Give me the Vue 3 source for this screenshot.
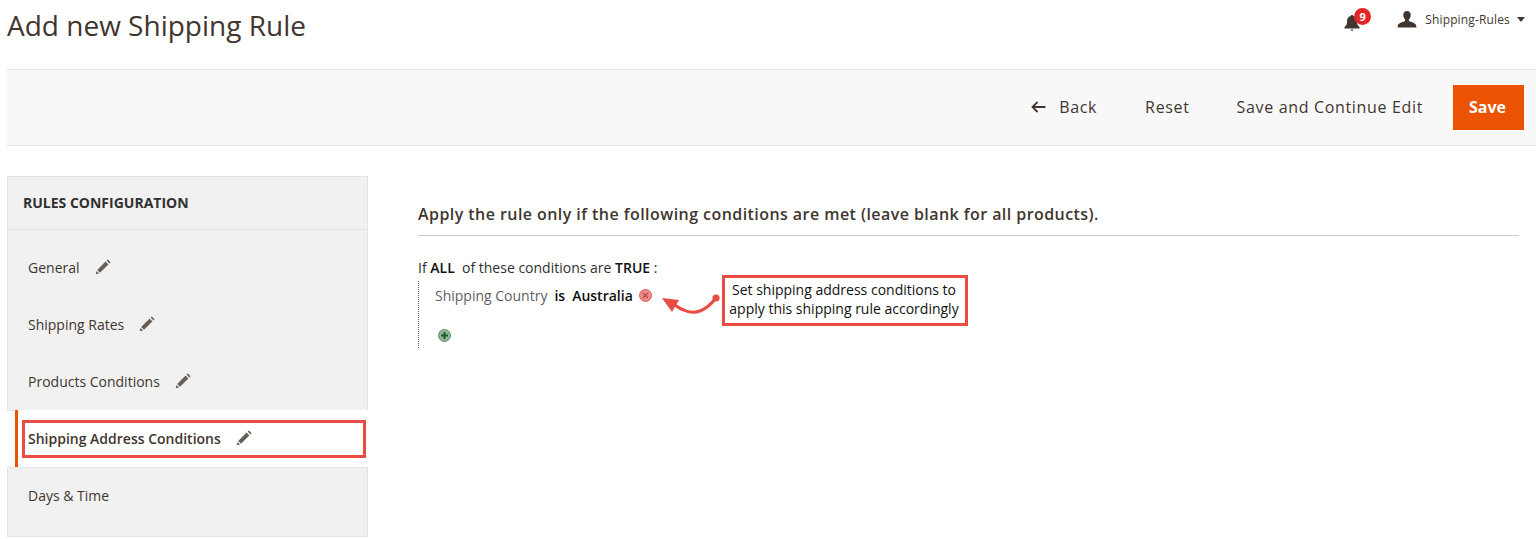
<script setup>
const topItems = ['General', 'Shipping Rates', 'Products Conditions']
</script>

<template>
  <div class="page">
    <header class="top">
      <h1>Add new Shipping Rule</h1>
      <div class="top-actions">
        <div class="bell">
          <svg width="16" height="18" viewBox="0 0 16 18">
            <path fill="#41362f" d="M8 1c.8 0 1.300.5 1.400 1.100C12 2.800 13 5 13 8c0 2.600 1 3.700 2.500 5v1.500H.5V13C2 11.700 3 10.600 3 8c0-3 1-5.200 3.600-5.900C6.700 1.500 7.200 1 8 1zM6.700 15.500h2.600c0 .7-.6 1.300-1.300 1.300s-1.300-.6-1.300-1.300z" />
          </svg>
          <span class="badge">9</span>
        </div>
        <div class="user">
          <svg width="20" height="17" viewBox="0 0 20 18">
            <path fill="#41362f" d="M10 0c2.600 0 4 1.800 4 4.300 0 2-1 3.800-2 4.700v1.500c1.500 1 7 1.800 7.600 4.500.2 1 .4 2 .4 2.500H0c0-.5.200-1.500.4-2.500C1 12.300 6.500 11.500 8 10.500V9C7 8.100 6 6.300 6 4.300 6 1.800 7.400 0 10 0z" />
          </svg>
          <span class="user-name">Shipping-Rules</span>
          <span class="caret"></span>
        </div>
      </div>
    </header>

    <div class="toolbar">
      <button class="tool back">
        <svg width="15" height="12" viewBox="0 0 15 12">
          <path fill="none" stroke="#41362f" stroke-width="1.800" d="M14.500 6H2M6.500 1L1.500 6l5 5" />
        </svg>
        Back
      </button>
      <button class="tool">Reset</button>
      <button class="tool">Save and Continue Edit</button>
      <button class="save">Save</button>
    </div>

    <div class="body">
      <aside class="side">
        <div class="side-group">
          <div class="side-title">RULES CONFIGURATION</div>
          <div class="side-list">
            <div v-for="item in topItems" :key="item" class="side-item">
              <span>{{ item }}</span>
              <svg class="pencil" width="16" height="16" viewBox="0 0 16 16">
                <path fill="#676056" d="M10.600 2.600l2.800 2.800L5 13.800 2.200 11zM11.600 1.600l1.200-1.200 2.800 2.800-1.200 1.200zM1.600 11.900l2.500 2.500-3.400.9z" />
              </svg>
            </div>
          </div>
        </div>
        <div class="side-item active">
          <span>Shipping Address Conditions</span>
          <svg class="pencil" width="16" height="16" viewBox="0 0 16 16">
            <path fill="#676056" d="M10.600 2.600l2.800 2.800L5 13.800 2.200 11zM11.600 1.600l1.200-1.200 2.800 2.800-1.200 1.200zM1.600 11.900l2.500 2.500-3.400.9z" />
          </svg>
          <div class="side-mark"></div>
        </div>
        <div class="side-group last">
          <div class="side-item">
            <span>Days &amp; Time</span>
          </div>
        </div>
      </aside>

      <main class="content">
        <h2>Apply the rule only if the following conditions are met (leave blank for all products).</h2>
        <div class="cond-head">If <b>ALL</b>&nbsp; of these conditions are <b>TRUE</b> :</div>
        <div class="cond-tree">
          <div class="cond-row">
            <span>Shipping Country</span>
            <b>is</b>
            <b>Australia</b>
            <svg class="cond-icon" width="13" height="13" viewBox="0 0 13 13">
              <circle cx="6.500" cy="6.500" r="6" fill="#ef8a8a" stroke="#d65b5b" />
              <path stroke="#b84545" stroke-width="1.200" d="M4 4l5 5M9 4l-5 5" />
            </svg>
          </div>
          <svg class="add-icon" width="13" height="13" viewBox="0 0 13 13">
            <circle cx="6.500" cy="6.500" r="6" fill="#8fb896" stroke="#5f9068" />
            <path stroke="#1f5a2c" stroke-width="2" d="M6.500 3v7M3 6.500h7" />
          </svg>

          <div class="note">
            <svg class="note-arrow" width="60" height="26" viewBox="0 0 60 26">
              <circle cx="54" cy="7" r="3.600" fill="#e94c43" />
              <path fill="none" stroke="#e94c43" stroke-width="3" d="M13 14C20 20 30 23 38 20C46 17 50 12 54 7" />
              <path fill="#e94c43" d="M0 7l17 2-7 12z" />
            </svg>
            <div class="note-box">Set shipping address conditions to<br>apply this shipping rule accordingly</div>
          </div>
        </div>
      </main>
    </div>
  </div>
</template>

<style>
html, body {
  margin: 0;
  background: #fff;
  overflow: hidden;
}
</style>

<style scoped>
.page {
  width: 1536px;
  height: 539px;
  overflow: hidden;
  font-family: "Open Sans", sans-serif;
  color: #41362f;
  font-size: 14px;
}

.top {
  height: 69px;
  box-sizing: border-box;
  padding: 8px 11px 0 7px;
  display: flex;
  justify-content: space-between;
  align-items: flex-start;
}

h1 {
  margin: -2px 0 0;
  font-size: 28px;
  line-height: 38px;
  font-weight: 400;
  color: #41362f;
}

.top-actions {
  display: flex;
  align-items: center;
  margin-top: -1px;
}

.bell {
  position: relative;
  display: flex;
  margin-right: 37px;
  margin-bottom: -1px;
  padding-top: 7px;
}

.badge {
  position: absolute;
  left: 10px;
  top: 1px;
  width: 17px;
  height: 17px;
  border-radius: 50%;
  background: #e22626;
  color: #fff;
  font-size: 11px;
  font-weight: 700;
  line-height: 17px;
  text-align: center;
}

.user {
  display: flex;
  align-items: center;
  font-size: 12px;
}

.user-name {
  margin-left: 8px;
  letter-spacing: 0.15px;
  color: #41362f;
}

.caret {
  margin-left: 7px;
  border-left: 4px solid transparent;
  border-right: 4px solid transparent;
  border-top: 5px solid #41362f;
}

.toolbar {
  height: 77px;
  box-sizing: border-box;
  margin-left: 7px;
  background: #f8f8f8;
  border-top: 1px solid #e3e3e3;
  border-bottom: 1px solid #e3e3e3;
  display: flex;
  align-items: center;
  justify-content: flex-end;
  padding-right: 12px;
}

.tool {
  border: 0;
  background: none;
  padding: 0 0 2px;
  margin-right: 47px;
  margin-left: 0;
  font: 16px/22px "Open Sans", sans-serif;
  letter-spacing: 0.66px;
  color: #41362f;
  display: flex;
  align-items: center;
}

.tool.back {
  margin-right: 48px;
}

.tool.back svg {
  margin-right: 13px;
}

.tool:nth-child(3) {
  margin-right: 30px;
}

.save {
  width: 71px;
  height: 45px;
  border: 0;
  padding: 0 2px 2px 0;
  background: #eb5202;
  color: #fff;
  font: 700 16px/22px "Open Sans", sans-serif;
}

.body {
  display: flex;
  padding: 30px 17px 0 7px;
}

.side {
  width: 361px;
  flex: none;
}

.side-group {
  background: #f1f1f1;
  border: 1px solid #e3e3e3;
  box-sizing: border-box;
}

.side-title {
  height: 53px;
  box-sizing: border-box;
  padding: 16px 15px 0;
  font-size: 14px;
  line-height: 19px;
  font-weight: 700;
  color: #303030;
  border-bottom: 1px solid #e3e3e3;
}

.side-list {
  padding-top: 9px;
}

.side-item {
  height: 57px;
  box-sizing: border-box;
  display: flex;
  align-items: center;
  padding-left: 20px;
  font-size: 14px;
  color: #41362f;
}

.pencil {
  margin-left: 15px;
  margin-top: -2px;
}

.active {
  position: relative;
  margin-top: -1px;
  margin-left: 8px;
  padding-left: 10px;
  border-left: 3px solid #eb5202;
  background: #fff;
  font-weight: 600;
}

.side-mark {
  position: absolute;
  left: 4px;
  top: 10px;
  width: 344px;
  height: 38px;
  border: 3px solid #e94c43;
  box-sizing: border-box;
}

.last {
  height: 70px;
}

.last .side-item {
  margin-top: -1px;
}

.content {
  flex: 1;
  margin-left: 50px;
  min-width: 0;
}

h2 {
  margin: 0;
  padding-top: 28px;
  height: 60px;
  box-sizing: border-box;
  font-size: 16px;
  line-height: 21px;
  font-weight: 600;
  color: #41362f;
  border-bottom: 1px solid #cccccc;
  letter-spacing: 0.44px;
}

.cond-head {
  margin-top: 22px;
  line-height: 19px;
  color: #303030;
}

.cond-head b {
  font-weight: 600;
  color: #111;
}

.cond-tree {
  position: relative;
  box-sizing: border-box;
  margin-top: 4px;
  height: 67px;
  padding: 3px 0 0 16px;
  border-left: 1px dotted #666;
}

.cond-row {
  display: flex;
  align-items: center;
  height: 23px;
  color: #5f5f5f;
}

.cond-row b {
  margin-left: 7px;
  font-weight: 600;
  color: #111;
}

.cond-icon {
  margin-left: 6px;
}

.add-icon {
  display: block;
  margin: 22px 0 0 3px;
}

.note {
  position: absolute;
  left: 243px;
  top: -6px;
  display: flex;
}

.note-arrow {
  position: absolute;
  left: 0;
  top: 16px;
}

.note-box {
  box-sizing: border-box;
  width: 246px;
  height: 51px;
  margin-left: 60px;
  border: 3px solid #e94c43;
  background: #fff;
  font-size: 14px;
  line-height: 19px;
  color: #111;
  text-align: center;
  padding: 2px 2px 0 0;
}
</style>
